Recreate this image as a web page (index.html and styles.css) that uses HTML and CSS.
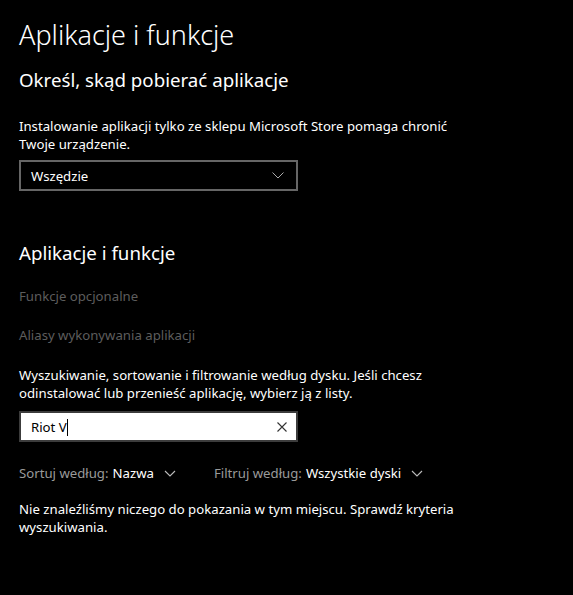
FILE: index.html
```html
<!DOCTYPE html>
<html lang="pl">

<head>
    <meta charset="UTF-8">
    <meta name="viewport" content="width=device-width, initial-scale=1.0">
    <title>Aplikacje i funkcje</title>
    <link rel="stylesheet" href="styles.css">
</head>

<body>
    <div class="page">
        <h1 class="page-title">Aplikacje i funkcje</h1>

        <!-- Skąd pobierać aplikacje -->
        <h2 class="section-title">Określ, skąd pobierać aplikacje</h2>
        <p class="text">Instalowanie aplikacji tylko ze sklepu Microsoft Store pomaga chronić Twoje urządzenie.</p>
        <div class="select">
            <span>Wszędzie</span>
            <svg class="chevron" width="12" height="7" viewBox="0 0 12 7">
                <path d="M0.5 0.5 L6 6 L11.5 0.5" fill="none" stroke="#aaa" stroke-width="1" />
            </svg>
        </div>

        <!-- Lista aplikacji -->
        <h2 class="section-title second">Aplikacje i funkcje</h2>
        <a class="link" href="#">Funkcje opcjonalne</a>
        <a class="link" href="#">Aliasy wykonywania aplikacji</a>

        <p class="text search-info">Wyszukiwanie, sortowanie i filtrowanie według dysku. Jeśli chcesz odinstalować lub przenieść aplikację, wybierz ją z listy.</p>
        <div class="search">
            <span class="search-value">Riot V<span class="caret"></span></span>
            <svg class="clear" width="10" height="10" viewBox="0 0 10 10">
                <path d="M0.5 0.5 L9.5 9.5 M9.5 0.5 L0.5 9.5" stroke="#333" stroke-width="1.1" />
            </svg>
        </div>

        <div class="filters">
            <div class="filter">
                <span class="filter-label">Sortuj według:</span>
                <span class="filter-value">Nazwa</span>
                <svg width="12" height="7" viewBox="0 0 12 7">
                    <path d="M1 1 L6 6 L11 1" fill="none" stroke="#bbb" stroke-width="1.1" />
                </svg>
            </div>
            <div class="filter">
                <span class="filter-label">Filtruj według:</span>
                <span class="filter-value">Wszystkie dyski</span>
                <svg width="12" height="7" viewBox="0 0 12 7">
                    <path d="M1 1 L6 6 L11 1" fill="none" stroke="#bbb" stroke-width="1.1" />
                </svg>
            </div>
        </div>

        <p class="text empty">Nie znaleźliśmy niczego do pokazania w tym miejscu. Sprawdź kryteria wyszukiwania.</p>
    </div>
</body>

</html>
```

FILE: styles.css
```css
body {
    margin: 0;
    background-color: #000;
    color: #fff;
    font-family: "Noto Sans", "Open Sans", sans-serif;
}

.page {
    width: 440px;
    padding: 17px 0 0 19px;
}

.page-title {
    margin: 0;
    font-size: 27px;
    font-weight: 300;
    line-height: 36px;
}

.section-title {
    margin: 14px 0 0;
    font-size: 18.7px;
    font-weight: 400;
    line-height: 26px;
}

.section-title.second {
    margin-top: 49px;
}

.text {
    margin: 0;
    font-size: 13.2px;
    line-height: 18px;
}

.section-title + .text {
    margin-top: 24px;
}

/* Lista rozwijana */
.select {
    box-sizing: border-box;
    width: 279px;
    height: 31px;
    margin-top: 7px;
    padding: 0 12px 0 10px;
    border: 2px solid #666;
    display: flex;
    align-items: center;
    justify-content: space-between;
    font-size: 13.2px;
}

.link {
    display: block;
    color: #5d5d5d;
    text-decoration: none;
    font-size: 13.2px;
    line-height: 19px;
    margin-top: 21px;
}

.link + .link {
    margin-top: 20px;
}

.search-info {
    margin-top: 21px;
}

/* Pole wyszukiwania */
.search {
    box-sizing: border-box;
    width: 279px;
    height: 31px;
    margin-top: 9px;
    padding: 0 9px 0 10px;
    border: 2px solid #3c3c3c;
    background-color: #fff;
    color: #000;
    display: flex;
    align-items: center;
    justify-content: space-between;
    font-size: 13.2px;
}

.caret {
    display: inline-block;
    width: 1px;
    height: 17px;
    background-color: #000;
    vertical-align: -4px;
}

.filters {
    display: flex;
    gap: 38px;
    margin-top: 22px;
    font-size: 13.2px;
    line-height: 19px;
}

.filter {
    display: flex;
    align-items: center;
    gap: 4px;
}

.filter-label {
    color: #9a9a9a;
}

.filter svg {
    margin-left: 6px;
}

.empty {
    margin-top: 17px;
}
```
